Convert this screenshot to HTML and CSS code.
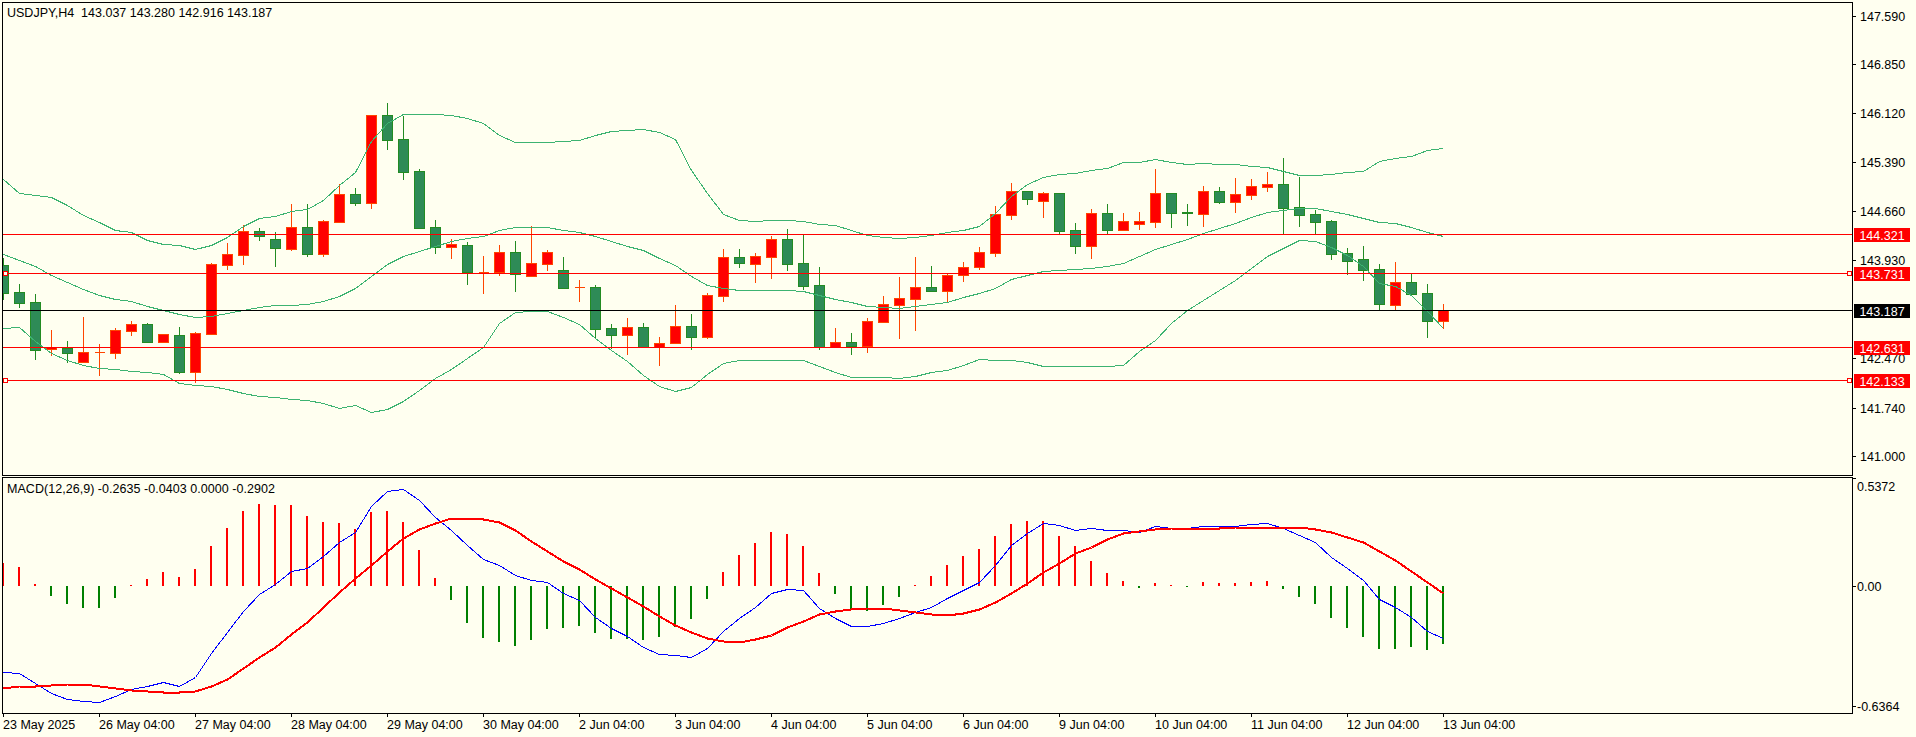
FILE: index.html
```html
<!DOCTYPE html>
<html lang="en">
<head>
    <meta charset="UTF-8">
    <title>USDJPY,H4</title>
    <link rel="stylesheet" href="styles.css">
</head>
<body>
    <div class="terminal">
        <div class="pane pane-main">
            <svg class="plot" id="mainPlot" viewBox="3 3 1849 472"></svg>
            <div class="legend">USDJPY,H4  143.037 143.280 142.916 143.187</div>
        </div>
        <div class="scale scale-main" id="mainScale"></div>

        <div class="pane pane-macd">
            <svg class="plot" id="macdPlot" viewBox="3 478 1849 235"></svg>
            <div class="legend">MACD(12,26,9) -0.2635 -0.0403 0.0000 -0.2902</div>
        </div>
        <div class="scale scale-macd" id="macdScale"></div>

        <div class="time-axis" id="timeAxis"></div>
    </div>

    <script src="script.js"></script>
</body>
</html>
```

FILE: styles.css
```css
html, body {
    margin: 0;
    padding: 0;
    height: 100%;
    overflow: hidden;
}

body {
    background-color: #fffff0;
    color: #000;
    font-family: "Liberation Sans", Arial, sans-serif;
    font-size: 12.5px;
    line-height: 14px;
}

.terminal {
    display: grid;
    grid-template-columns: 1851px 63px;
    grid-template-rows: 474px 238px 23px;
    padding: 2px 0 0 2px;
}

.pane {
    position: relative;
    border: 1px solid #000;
    box-sizing: border-box;
}

.pane-macd,
.scale-macd {
    margin-top: 1px;
}

.plot {
    display: block;
    width: 1849px;
    height: 100%;
    shape-rendering: crispEdges;
}

.legend {
    position: absolute;
    left: 4px;
    top: 3px;
    white-space: pre;
}

.pane-macd .legend {
    top: 4px;
    letter-spacing: 0.04px;
}

.scale {
    position: relative;
}

.scale-label {
    position: absolute;
    left: 7px;
    white-space: nowrap;
}

.scale-tick {
    position: absolute;
    left: 0;
    width: 3px;
    height: 1px;
    background-color: #000;
}

.scale-macd .scale-label {
    left: 4px;
}

.price-tag {
    position: absolute;
    left: 1px;
    width: 56px;
    height: 14px;
    line-height: 16px;
    text-align: center;
    color: #fff;
    background-color: #f00;
}

.price-tag.bid {
    background-color: #000;
}

.time-axis {
    grid-column: 1 / 3;
    position: relative;
}

.time-label {
    position: absolute;
    top: 4px;
    white-space: nowrap;
}

.time-tick {
    position: absolute;
    top: 0;
    width: 1px;
    height: 3px;
    background-color: #000;
}

.candle-up {
    fill: #f00;
    stroke: #ff4500;
}

.candle-down {
    fill: #2e8b57;
    stroke: #228b22;
}

.band {
    fill: none;
    stroke: #3cb371;
    stroke-width: 1;
}

.macd-line {
    fill: none;
    stroke: #00f;
    stroke-width: 1;
}

.signal-line {
    fill: none;
    stroke: #f00;
    stroke-width: 2;
}

.hist-up {
    fill: #f00;
}

.hist-down {
    fill: #008000;
}

.level {
    stroke: #f00;
    stroke-width: 1;
}

.level-bid {
    stroke: #000;
    stroke-width: 1;
}

.level-handle {
    fill: #fffff0;
    stroke: #f00;
    stroke-width: 1;
}
```

FILE: script.js
```js
// Everything is read off the chart at 3x, so y values below are in thirds of a pixel.
const SVG_NS = 'http://www.w3.org/2000/svg';
const BAR_STEP = 16;
const FIRST_BAR_X = 3;
const MACD_TOP = 367;
const MAIN_SCALE_TOP = 2;
const MACD_SCALE_TOP = 477;

// [direction, high, body top, body bottom, low]
const candles = [
    ['d',775,795,878,900],['d',852,877,908,923],['d',882,906,1049,1080],['u',990,1042,1048,1068],
    ['d',1023,1043,1058,1088],['u',951,1057,1085,1088],['u',1032,1057,1057,1128],['u',984,991,1058,1077],
    ['u',963,973,992,1007],['d',969,972,1025,1027],['u',1003,1003,1025,1029],['d',981,1005,1116,1121],
    ['u',995,999,1116,1148],['u',788,792,1001,1001],['u',730,763,794,810],['u',676,694,765,795],
    ['d',684,693,707,723],['d',697,718,744,801],['u',612,682,746,752],['d',612,681,762,771],
    ['u',660,664,762,771],['u',553,583,665,665],['d',564,582,608,617],['u',346,346,608,627],
    ['d',309,345,419,450],['d',348,418,516,540],['d',508,514,684,687],['d',660,682,741,762],
    ['u',718,732,740,777],['d',727,735,816,855],['u',768,815,815,882],['u',735,757,816,828],
    ['d',723,757,823,876],['u',678,790,827,828],['u',750,757,791,813],['d',771,811,864,867],
    ['u',840,862,862,906],['d',855,862,986,1014],['d',972,985,1004,1047],['u',954,982,1004,1065],
    ['d',969,982,1041,1042],['u',1011,1030,1042,1098],['u',915,979,1028,1032],['d',942,979,1010,1050],
    ['u',880,886,1010,1017],['u',747,772,887,906],['d',747,771,789,804],['u',759,769,791,849],
    ['u',708,718,770,837],['d',687,718,791,813],['d',705,790,858,870],['d',801,856,1042,1050],
    ['u',985,1027,1042,1045],['d',999,1027,1037,1065],['u',954,964,1037,1059],['u',888,913,965,969],
    ['u',831,895,914,1017],['u',771,862,896,993],['d',798,862,873,875],['u',822,826,873,909],
    ['u',786,802,825,846],['u',741,757,801,810],['u',618,643,758,771],['u',549,574,644,660],
    ['d',574,574,597,615],['u',576,580,602,654],['d',580,580,692,702],['d',669,691,738,762],
    ['u',627,640,738,777],['d',612,640,690,702],['u',639,664,690,693],['u',636,664,671,690],
    ['u',507,580,665,684],['d',580,580,639,684],['d',612,637,640,678],['u',558,574,641,681],
    ['d',561,574,605,612],['u',534,583,605,639],['u',537,559,584,600],['u',516,552,560,576],
    ['d',474,553,623,703],['d',531,622,644,681],['d',630,643,665,702],['d',660,664,762,780],
    ['d',744,760,782,825],['d',738,778,809,843],['d',792,808,912,933],['u',786,847,914,930],
    ['d',820,847,881,881],['d',852,880,962,1014],['u',912,931,962,987]
];

const bandUpper = [
    538,580,585,592,615,645,668,690,698,722,733,737,748,735,712,680,655,650,635,628,
    600,555,517,425,370,344,343,343,346,355,369,407,427,427,427,424,421,405,395,391,
    388,397,418,510,580,643,661,664,661,661,663,672,676,690,705,712,716,711,706,696,
    690,680,640,590,553,531,523,520,512,504,488,487,478,487,494,491,493,493,498,503,
    513,526,526,523,517,514,484,475,469,451,444
];

const bandMiddle = [
    763,780,800,825,848,868,885,897,905,918,932,942,952,950,940,930,923,917,915,912,
    904,890,865,830,792,770,753,740,725,716,708,690,683,682,682,690,696,708,725,740,
    752,775,797,830,855,866,871,871,871,871,875,885,897,908,918,921,925,918,912,906,
    893,880,865,838,826,815,811,808,806,800,790,770,747,733,717,700,685,670,652,637,
    630,625,626,634,643,654,666,670,681,697,710
];

const bandLower = [
    985,982,1025,1060,1080,1095,1104,1108,1113,1118,1123,1151,1155,1159,1169,1179,1189,1193,1197,1201,
    1211,1225,1216,1236,1228,1204,1171,1136,1108,1075,1043,970,936,933,933,953,972,1015,1050,1085,
    1126,1159,1174,1161,1123,1090,1081,1081,1081,1081,1081,1100,1117,1132,1132,1132,1136,1128,1118,1112,
    1095,1078,1081,1081,1087,1099,1099,1098,1098,1099,1095,1055,1020,970,930,900,870,842,805,770,
    745,720,725,742,765,800,850,860,885,935,985
];

// The MACD values start from MACD_TOP
const macdMain = [
    916,918,950,978,996,1003,1007,987,968,957,945,958,932,860,795,733,683,653,612,603,
    568,527,495,417,374,367,400,450,490,535,577,595,625,641,647,680,700,750,785,808,
    842,862,866,871,845,792,755,720,678,666,670,725,755,778,778,770,755,735,720,695,
    671,645,595,535,500,468,475,490,484,490,490,495,479,484,484,479,479,478,472,468,
    484,505,525,572,605,640,697,722,750,792,813
];

const macdSignal = [
    965,959,958,955,953,951,957,963,969,973,975,975,974,958,938,905,870,840,802,765,
    722,675,635,595,552,515,488,468,454,453,458,465,490,522,552,582,607,637,665,692,
    718,747,775,797,815,824,825,816,805,782,762,743,733,727,723,724,731,737,742,744,
    740,727,705,680,650,615,590,560,540,518,500,492,486,485,485,485,484,482,482,480,
    480,481,488,495,510,527,553,580,612,645,678
];

const macdZero = 657;
const macdHist = [
    588,600,651,687,711,723,723,693,654,636,615,630,606,537,483,432,411,414,414,447,
    465,468,486,435,432,465,549,633,699,768,813,825,837,819,786,783,777,798,816,816,
    819,810,780,756,696,615,564,528,495,501,537,618,681,726,732,714,690,654,627,594,
    567,546,507,471,462,462,507,537,582,618,642,663,648,654,660,645,648,648,645,642,
    666,690,711,753,783,810,846,846,840,849,831
];

const levels = [
    { y: 234, price: '144.321' },
    { y: 273, price: '143.731', handles: true },
    { y: 347, price: '142.631' },
    { y: 380, price: '142.133', handles: true }
];
const bid = { y: 310, price: '143.187' };

const priceTicks = [
    ['147.590', 16], ['146.850', 64], ['146.120', 113], ['145.390', 162], ['144.660', 211],
    ['143.930', 260], ['142.470', 358], ['141.740', 408], ['141.000', 456]
];

const macdTicks = [['0.5372', 486, 478], ['0.00', 586, 586], ['-0.6364', 706, 706]];

const timeLabels = [
    '23 May 2025', '26 May 04:00', '27 May 04:00', '28 May 04:00', '29 May 04:00', '30 May 04:00',
    '2 Jun 04:00', '3 Jun 04:00', '4 Jun 04:00', '5 Jun 04:00', '6 Jun 04:00', '9 Jun 04:00',
    '10 Jun 04:00', '11 Jun 04:00', '12 Jun 04:00', '13 Jun 04:00'
];

function barX(i) {
    return FIRST_BAR_X + i * BAR_STEP;
}

function svgEl(parent, name, attrs) {
    const el = document.createElementNS(SVG_NS, name);
    for (const key in attrs) {
        el.setAttribute(key, attrs[key]);
    }
    parent.appendChild(el);
    return el;
}

function htmlEl(parent, className, text, left, top) {
    const el = document.createElement('div');
    el.className = className;
    if (text) el.textContent = text;
    if (left !== null) el.style.left = `${left}px`;
    if (top !== null) el.style.top = `${top}px`;
    parent.appendChild(el);
    return el;
}

function drawLine(svg, values, className, offset) {
    const points = values.map((v, i) => `${barX(i) + 0.5},${offset + Math.floor(v / 3) + 0.5}`);
    svgEl(svg, 'polyline', { points: points.join(' '), class: className });
}

function drawCandles(svg) {
    candles.forEach(([dir, high, top, bottom, low], i) => {
        const x = barX(i);
        const cls = dir === 'u' ? 'candle-up' : 'candle-down';
        const yTop = Math.round(top / 3);
        const yBottom = Math.round(bottom / 3);
        svgEl(svg, 'path', {
            d: `M${x + 0.5} ${Math.round(high / 3)}V${Math.round(low / 3)}`,
            class: cls
        });
        svgEl(svg, 'path', {
            d: `M${x - 4.5} ${yTop + 0.5}H${x + 5.5}V${yBottom + 0.5}H${x - 4.5}Z`,
            class: cls
        });
    });
}

function drawLevels(svg) {
    levels.forEach(level => {
        svgEl(svg, 'line', { x1: 3, x2: 1852, y1: level.y + 0.5, y2: level.y + 0.5, class: 'level' });
        if (level.handles) {
            [3, 1847].forEach(x => {
                svgEl(svg, 'rect', { x: x + 0.5, y: level.y - 1.5, width: 4, height: 4, class: 'level-handle' });
            });
        }
    });
    svgEl(svg, 'line', { x1: 3, x2: 1852, y1: bid.y + 0.5, y2: bid.y + 0.5, class: 'level-bid' });
}

function drawHistogram(svg) {
    macdHist.forEach((v, i) => {
        const up = v < macdZero;
        const yEnd = MACD_TOP + Math.round(v / 3);
        const yZero = MACD_TOP + Math.round(macdZero / 3);
        svgEl(svg, 'rect', {
            x: barX(i) - 1,
            y: Math.min(yEnd, yZero),
            width: 2,
            height: Math.abs(yEnd - yZero),
            class: up ? 'hist-up' : 'hist-down'
        });
    });
}

function fillMainScale(scale) {
    priceTicks.forEach(([text, y]) => {
        htmlEl(scale, 'scale-tick', '', null, y - MAIN_SCALE_TOP);
        htmlEl(scale, 'scale-label', text, null, y - MAIN_SCALE_TOP - 6);
    });
    levels.concat(bid).forEach(level => {
        const cls = level === bid ? 'price-tag bid' : 'price-tag';
        htmlEl(scale, cls, level.price, null, level.y - MAIN_SCALE_TOP - 6);
    });
}

function fillMacdScale(scale) {
    macdTicks.forEach(([text, y, tickY]) => {
        htmlEl(scale, 'scale-tick', '', null, tickY - MACD_SCALE_TOP);
        htmlEl(scale, 'scale-label', text, null, y - MACD_SCALE_TOP - 6);
    });
}

function fillTimeAxis(axis) {
    timeLabels.forEach((text, i) => {
        const x = barX(i * 6) - 2;
        htmlEl(axis, 'time-tick', '', x, null);
        htmlEl(axis, 'time-label', text, x, null);
    });
}

const mainPlot = document.getElementById('mainPlot');
drawCandles(mainPlot);
drawLine(mainPlot, bandUpper, 'band', 0);
drawLine(mainPlot, bandMiddle, 'band', 0);
drawLine(mainPlot, bandLower, 'band', 0);
drawLevels(mainPlot);

const macdPlot = document.getElementById('macdPlot');
drawHistogram(macdPlot);
drawLine(macdPlot, macdMain, 'macd-line', MACD_TOP);
drawLine(macdPlot, macdSignal, 'signal-line', MACD_TOP);

fillMainScale(document.getElementById('mainScale'));
fillMacdScale(document.getElementById('macdScale'));
fillTimeAxis(document.getElementById('timeAxis'));
```
